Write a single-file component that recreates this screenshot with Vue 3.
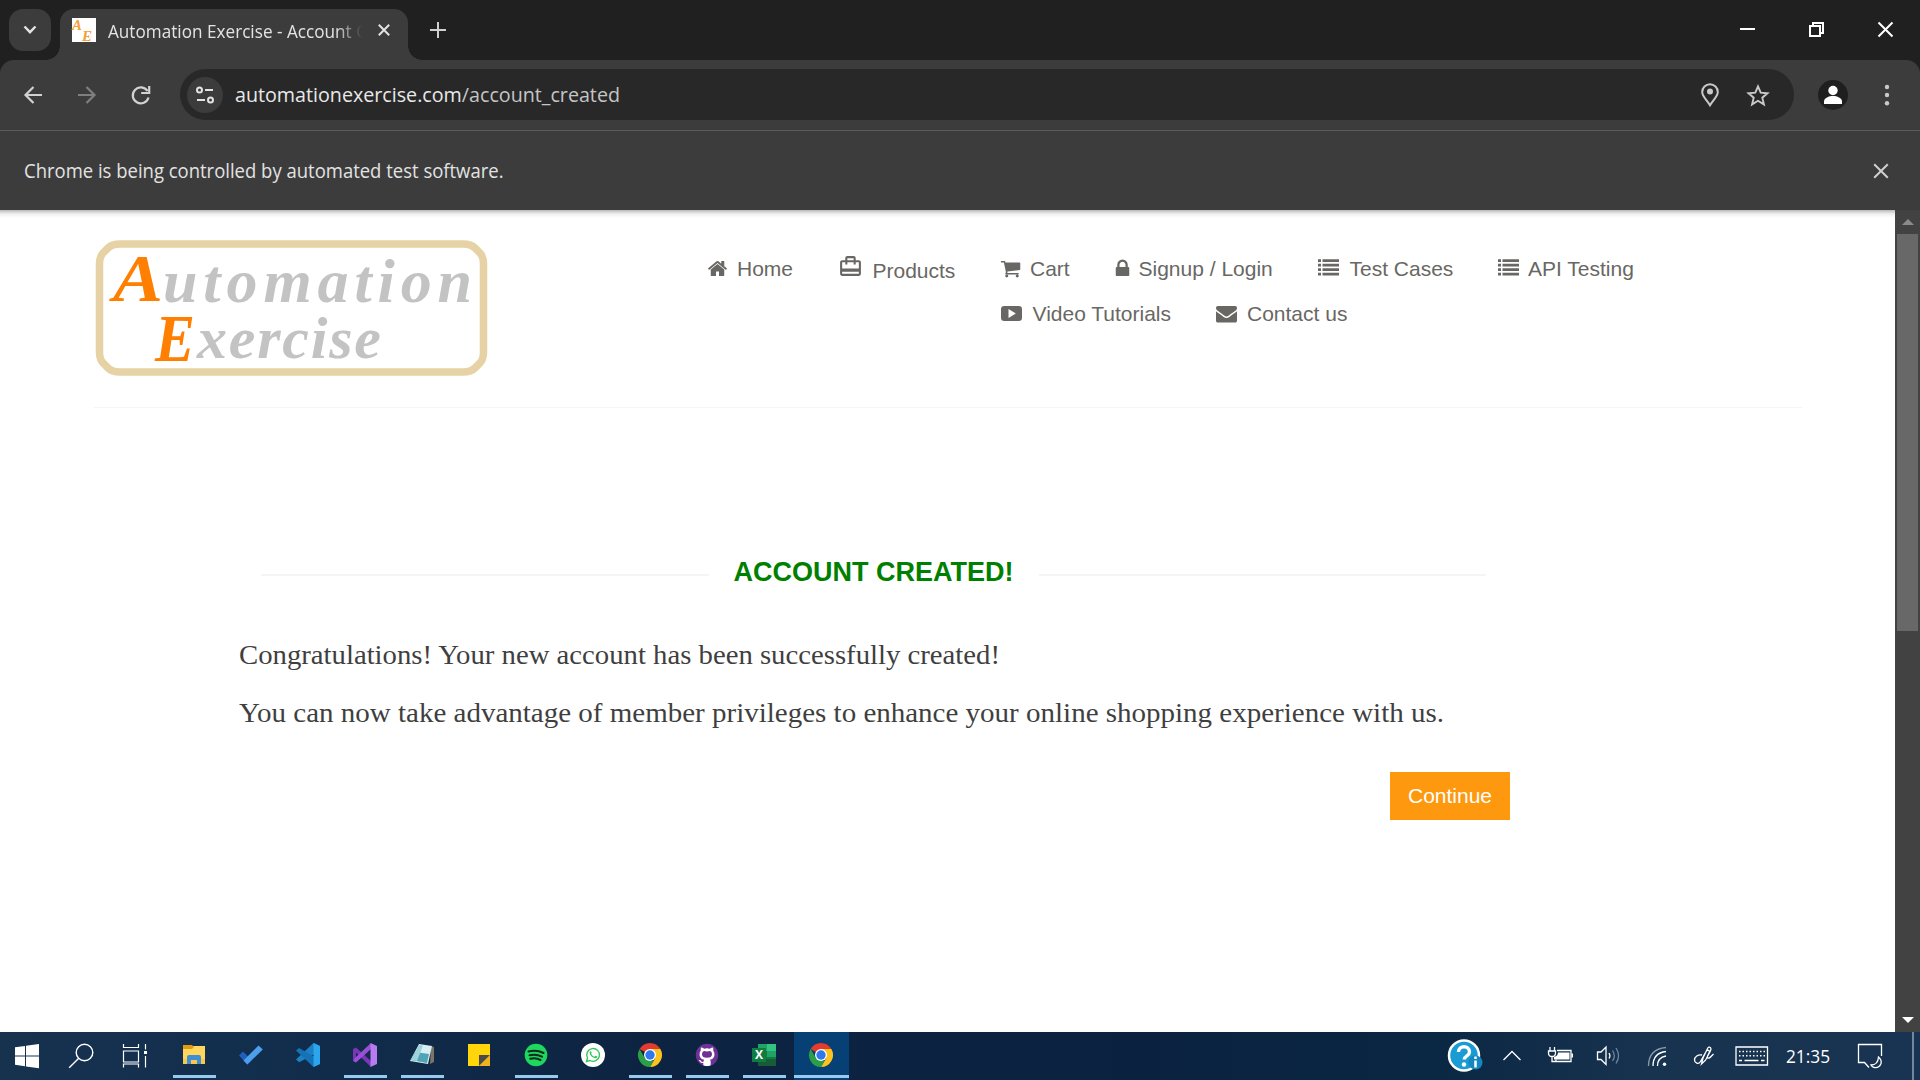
<script setup>
const icons = {
  home: 'M1472 992v480q0 26-19 45t-45 19h-384v-384h-256v384h-384q-26 0-45-19t-19-45v-480q0-1 .5-3t.5-3l575-474 575 474q1 2 1 6zm223-69l-62 74q-8 9-21 11h-3q-13 0-21-7l-692-577-692 577q-12 8-24 7-13-2-21-11l-62-74q-8-10-7-23.5t11-21.5l719-599q32-26 76-26t76 26l244 204v-195q0-14 9-23t23-9h192q14 0 23 9t9 23v408l219 182q10 8 11 21.5t-7 23.5z',
  cart: 'M704 1536q0 52-38 90t-90 38-90-38-38-90 38-90 90-38 90 38 38 90zm896 0q0 52-38 90t-90 38-90-38-38-90 38-90 90-38 90 38 38 90zm128-1088v512q0 24-16.5 42.5t-40.5 21.5l-1044 122q13 60 13 70 0 16-24 64h920q26 0 45 19t19 45-19 45-45 19h-1024q-26 0-45-19t-19-45q0-11 8-31.5t16-36 21.5-40 15.5-29.5l-177-823h-204q-26 0-45-19t-19-45 19-45 45-19h256q16 0 28.5 6.5t19.5 15.5 13 24.5 8 26 5.5 29.5 4.5 26h1201q26 0 45 19t19 45z',
  lock: 'M640 768h512v-192q0-106-75-181t-181-75-181 75-75 181v192zm832 96v576q0 40-28 68t-68 28h-960q-40 0-68-28t-28-68v-576q0-40 28-68t68-28h32v-192q0-184 132-316t316-132 316 132 132 316v192h32q40 0 68 28t28 68z',
  list: 'M0 100h256v241H0zM384 100h1408v241H384zM0 484h256v241H0zM384 484h1408v241H384zM0 868h256v241H0zM384 868h1408v241H384zM0 1252h256v241H0zM384 1252h1408v241H384z',
  video: 'M280 256h1232q280 0 280 280v720q0 280-280 280H280q-280 0-280-280V536q0-280 280-280zM680 530q-40-24-40 20v692q0 44 40 20l550-336q40-30 0-60z',
  envelope: 'M1792 710v794q0 66-47 113t-113 47h-1472q-66 0-113-47t-47-113v-794q44 49 101 87 362 246 497 345 57 42 92.5 65.5t94.5 48 110 24.5h2q51 0 110-24.5t94.5-48 92.5-65.5q170-123 498-345 57-39 100-87zm0-294q0 79-49 151t-122 123q-376 261-468 325-10 7-42.5 31t-54 38.5-52 32.5-57.5 27-50 9h-2q-23 0-50-9t-57.5-27-52-32.5-54-38.5-42.5-31q-91-64-262-182.5t-205-142.5q-62-42-117-115.5t-55-136.5q0-78 41.5-130t118.5-52h1472q65 0 112.5 47t47.5 113z',
}
const topLinks = [
  { label: 'Home', icon: 'home' },
  { label: 'Products', icon: 'travel' },
  { label: 'Cart', icon: 'cart' },
  { label: 'Signup / Login', icon: 'lock' },
  { label: 'Test Cases', icon: 'list' },
  { label: 'API Testing', icon: 'list' },
]
const moreLinks = [
  { label: 'Video Tutorials', icon: 'video' },
  { label: 'Contact us', icon: 'envelope' },
]
const apps = [
  { id: 'explorer', open: true },
  { id: 'todo' },
  { id: 'vscode' },
  { id: 'vstudio', open: true },
  { id: 'notepad', open: true },
  { id: 'sticky' },
  { id: 'spotify', open: true },
  { id: 'whatsapp' },
  { id: 'chrome', open: true },
  { id: 'github', open: true },
  { id: 'excel', open: true },
  { id: 'chrome', open: true, active: true },
]
</script>

<template>
  <div class="screen">
    <header class="tabstrip">
      <button class="tab-search">
        <svg width="14" height="10" viewBox="0 0 14 10"><path d="M1.5 1.5 7 7.2l5.500-5.700" fill="none" stroke="#e3e3e3" stroke-width="2.400" /></svg>
      </button>
      <div class="tab">
        <svg class="favicon" viewBox="0 0 24 24">
          <rect width="24" height="24" fill="#fff" />
          <text x="0" y="12" font-size="15">A</text>
          <text x="10" y="22.500" font-size="15">E</text>
        </svg>
        <svg class="tab-title" width="262" height="30" viewBox="0 0 262 30">
          <text x="0" y="21" font-size="18" textLength="259" lengthAdjust="spacingAndGlyphs">Automation Exercise - Account C</text>
        </svg>
        <svg class="tab-close" width="12" height="12" viewBox="0 0 12 12"><path d="M.8.8l10.400 10.400M11.200.8.8 11.200" stroke="#e3e3e3" stroke-width="2" /></svg>
      </div>
      <svg class="new-tab" width="16" height="16" viewBox="0 0 16 16"><path d="M8 0v16M0 8h16" stroke="#d0d0d0" stroke-width="2" /></svg>
      <svg class="window-buttons" width="190" height="60" viewBox="1730 0 190 60" fill="none" stroke="#fff">
        <path d="M1740 29h15" stroke-width="2" />
        <path d="M1813 26v-3h10v10h-3M1810 26h10v10h-10z" stroke-width="2" />
        <path d="M1878.500 22.500l14 14M1892.500 22.500l-14 14" stroke-width="2" />
      </svg>
    </header>

    <div class="toolbar">
      <svg class="nav-buttons" width="180" height="69" viewBox="0 60 180 69" fill="none" stroke-width="2.200">
        <path d="M42 95H26M33.500 87l-8 8 8 8" stroke="#d2d2d2" />
        <path d="M78 95h16M86.500 87l8 8-8 8" stroke="#7f7f7f" />
        <path d="M147.500 91a8 8 0 1 0 1 6.500M149.200 86v7h-8" stroke="#d2d2d2" />
      </svg>
      <div class="omnibox">
        <span class="site-info">
          <svg width="20" height="20" viewBox="0 0 20 20" fill="none" stroke="#e3e3e3" stroke-width="2"><circle cx="4.500" cy="5" r="2.500" /><path d="M10 5h8M2 15h8" /><circle cx="15.500" cy="15" r="2.500" /></svg>
        </span>
        <svg class="url" width="400" height="50" viewBox="0 0 400 50">
          <text x="0" y="32" font-size="20" textLength="385" lengthAdjust="spacingAndGlyphs"><tspan fill="#e8e8e8">automationexercise.com</tspan><tspan fill="#c5c5c5">/account_created</tspan></text>
        </svg>
        <svg class="box-actions" width="104" height="51" viewBox="1690 69 104 51" fill="none" stroke="#c9c9c9">
          <path d="M1710 84.200a7.800 7.800 0 0 1 7.800 7.800c0 4.500-4.500 7.500-7.800 13.200-3.300-5.700-7.800-8.700-7.800-13.200a7.800 7.800 0 0 1 7.800-7.800z" stroke-width="2" />
          <circle cx="1710" cy="91.500" r="3" fill="#c9c9c9" stroke="none" />
          <path d="M1758 86.300l2.700 6.300 6.800.6-5.200 4.500 1.600 6.700-5.900-3.600-5.900 3.600 1.600-6.700-5.200-4.500 6.800-.6z" stroke-width="1.900" />
        </svg>
      </div>
      <svg class="profile" width="126" height="69" viewBox="1794 60 126 69">
        <circle cx="1833" cy="95" r="15" fill="#1f1f1f" />
        <g fill="#fff"><circle cx="1833" cy="90.500" r="4.700" /><path d="M1824 104v-2.500c0-3.600 5-5.500 9-5.500s9 1.900 9 5.500v2.500z" /></g>
        <g fill="#c9c9c9"><circle cx="1887" cy="87" r="2.200" /><circle cx="1887" cy="95" r="2.200" /><circle cx="1887" cy="103.200" r="2.200" /></g>
      </svg>
    </div>

    <div class="infobar">
      <svg width="500" height="40" viewBox="0 0 500 40">
        <text x="0" y="27" font-size="19.500" fill="#e3e3e3" textLength="479.500" lengthAdjust="spacingAndGlyphs">Chrome is being controlled by automated test software.</text>
      </svg>
      <svg width="16" height="16" viewBox="0 0 16 16"><path d="M1.200 1.200l13.600 13.600M14.800 1.200 1.200 14.800" stroke="#d0d0d0" stroke-width="2" /></svg>
    </div>

    <div class="viewport">
      <main class="page">
        <div class="site-header">
          <svg class="logo" width="393" height="138" viewBox="95 239 393 138">
            <path d="M120 244h343q8 0 12 4l5 5q3.500 4 3.500 11v88q0 7-3.500 11l-5 5q-4 4-12 4H120q-8 0-12-4l-5-5q-3.500-4-3.500-11v-88q0-7 3.500-11l5-5q4-4 12-4z" fill="none" stroke="#e6d2a4" stroke-width="7.500" />
            <g class="logo-text">
              <text x="113" y="301" class="cap" font-size="68" textLength="50" lengthAdjust="spacingAndGlyphs">A</text>
              <text x="163" y="302" font-size="62" textLength="309" lengthAdjust="spacing">utomation</text>
              <text x="155" y="361" class="cap" font-size="68" textLength="40" lengthAdjust="spacingAndGlyphs">E</text>
              <text x="197" y="358" font-size="60" textLength="184" lengthAdjust="spacing">xercise</text>
            </g>
          </svg>
          <nav class="menu">
            <div class="menu-row">
              <a v-for="l in topLinks" :key="l.label" :class="l.icon">
                <svg v-if="l.icon === 'travel'" width="25" height="25" viewBox="0 0 24 24"><path d="M20 6h-3V4c0-1.110-.89-2-2-2H9c-1.110 0-2 .89-2 2v2H4c-1.110 0-2 .89-2 2v11c0 1.110.89 2 2 2h16c1.110 0 2-.89 2-2V8c0-1.110-.89-2-2-2zM9 4h6v2H9V4zm11 15H4v-2h16v2zm0-5H4V8h3v2h2V8h6v2h2V8h3v6z" /></svg>
                <svg v-else width="21" height="21" viewBox="0 0 1792 1792"><path :d="icons[l.icon]" fill-rule="evenodd" /></svg>
                <span>{{ l.label }}</span>
              </a>
            </div>
            <div class="menu-row second">
              <a v-for="l in moreLinks" :key="l.label" :class="l.icon">
                <svg width="21" height="21" viewBox="0 0 1792 1792"><path :d="icons[l.icon]" fill-rule="evenodd" /></svg>
                <span>{{ l.label }}</span>
              </a>
            </div>
          </nav>
        </div>

        <section class="created">
          <h2>Account Created!</h2>
          <svg class="message" width="1240" height="58" viewBox="0 0 1240 58">
            <text x="0" y="33" textLength="761" lengthAdjust="spacingAndGlyphs">Congratulations! Your new account has been successfully created!</text>
          </svg>
          <svg class="message" width="1240" height="58" viewBox="0 0 1240 58">
            <text x="0" y="33" textLength="1205" lengthAdjust="spacingAndGlyphs">You can now take advantage of member privileges to enhance your online shopping experience with us.</text>
          </svg>
          <button class="continue">Continue</button>
        </section>
      </main>
      <div class="scrollbar">
        <i class="up"></i>
        <div class="thumb"></div>
        <i class="down"></i>
      </div>
    </div>

    <footer class="taskbar">
      <svg width="167" height="48" viewBox="0 1032 167 48">
        <path fill="#fff" d="M15 1047.300l10-1.400v9.600H15zM26 1045.700l13-1.800v11.600H26zM15 1056.500h10v9.700l-10-1.400zM26 1056.500h13v11.700l-13-1.800z" />
        <g fill="none" stroke="#fff" stroke-width="1.400">
          <circle cx="84.500" cy="1052.500" r="8.300" /><path d="M78.500 1058.500l-9.300 9.300" />
          <path stroke-width="1.200" d="M123.500 1044v3.500h15V1044M123.500 1051h15v11h-15zM123.500 1067.500v-3.500h15v3.500M145.500 1044v5.500M145.500 1056v11.500" />
        </g>
        <rect x="144" y="1051" width="3" height="3" fill="#fff" />
      </svg>

      <div v-for="(a, i) in apps" :key="i" class="app" :class="{ open: a.open, active: a.active }">
        <svg v-if="a.id === 'explorer'" viewBox="0 0 24 24">
          <path fill="#ffd75e" d="M1 3h22v18H1z" /><path fill="#e39a0c" d="M1 2h9l2 2-2 2H1z" /><path fill="#f9c84a" d="M1 16h22v5H1z" />
          <path fill="#3f8fd2" d="M5 21v-7q0-2 2-2h10q2 0 2 2v7h-4v-4H9v4z" />
        </svg>
        <svg v-else-if="a.id === 'todo'" viewBox="0 0 24 24">
          <path fill="#1f5fc0" d="M0 12.500 4 8.500l8.500 8.500-4.200 4.500z" /><path fill="#4ba0ee" d="M8.300 21.500 4.500 17.500 19.500 2.500l4.300 4z" />
        </svg>
        <svg v-else-if="a.id === 'vscode'" viewBox="0 0 24 24">
          <path fill="#1b80c4" d="M17.500 0 24 3v5L3.200 19.200 0 16.500z" /><path fill="#1473b8" d="M3 5 0 7.500 17.500 24l6.500-3v-4z" /><path fill="#2aa5ee" d="M17.500 0 24 3v18l-6.500 3z" />
        </svg>
        <svg v-else-if="a.id === 'vstudio'" viewBox="0 0 24 24">
          <path fill="#7a36b8" d="M0 6l3-1.500L18 18v6L3 9.500V16l-3 2z" /><path fill="#9a4fd8" d="M0 18l3 1.500L18 6V0L3 14z" /><path fill="#b87cf0" d="M17.500 0 24 3v18l-6.500 3z" />
        </svg>
        <svg v-else-if="a.id === 'notepad'" viewBox="0 0 24 24">
          <path fill="#7d7466" d="M21 3l3 1v15l-4 2z" /><path fill="#d7eef2" d="M9 1l13 2-4 18L0 18z" /><path fill="#4fa5b5" d="M5 9l14 2-2 9L1 17z" /><path fill="#9ed3dc" d="M9 2l4 .5L7 18l-6-1z" />
        </svg>
        <svg v-else-if="a.id === 'sticky'" viewBox="0 0 24 24">
          <path fill="#ffd60a" d="M1 1h22v11l-11 11H1z" /><path fill="#4a4a4a" d="M12 12h11L12 23z" /><path fill="#f0b11d" d="M23 12v11H12z" />
        </svg>
        <svg v-else-if="a.id === 'spotify'" viewBox="0 0 24 24">
          <circle cx="12" cy="12" r="11.300" fill="#1ed760" /><path d="M4.500 8.500q8-2.200 15 1.500M5.500 12.300q6.500-1.800 12.500 1.400M6.300 15.800q5.500-1.400 10.200 1.200" fill="none" stroke="#0c2b1a" stroke-width="2" stroke-linecap="round" />
        </svg>
        <svg v-else-if="a.id === 'whatsapp'" viewBox="0 0 24 24">
          <circle cx="12" cy="12" r="12" fill="#fff" /><path d="M5.500 18.500l1-3.500a6.400 6.400 0 1 1 2.500 2.500z" fill="none" stroke="#35c75a" stroke-width="1.400" /><path d="M9 8.500c.7-.7 1.200-.3 1.700 1.200.1.600-.7.900-.4 1.400.8 1.500 1.800 2.200 3 2.600.6 0 .9-1.200 1.500-.9 1.500.7 1.700.8 1.200 1.700-1.700 2.300-8.800-2-7-6z" fill="#35c75a" />
        </svg>
        <svg v-else-if="a.id === 'chrome'" viewBox="0 0 24 24">
          <path fill="#e33b2e" d="M12 12 1.600 6a12 12 0 0 1 20.800 0z" /><path fill="#fcc31e" d="M12 6h10.400A12 12 0 0 1 12 24l5.200-9z" /><path fill="#2a9f47" d="M1.600 6l5.200 9 5.200 3h3.500L12 24A12 12 0 0 1 1.600 6z" />
          <circle cx="12" cy="12" r="6" fill="#fff" /><circle cx="12" cy="12" r="4.700" fill="#2f78ec" />
        </svg>
        <svg v-else-if="a.id === 'github'" viewBox="0 0 24 24">
          <circle cx="12" cy="12" r="11.200" fill="#6e3294" /><path fill="#fff" d="M12 5.300q1.700 0 2.800.4Q17 4.300 18 4.600q.6 1.800.2 3Q19.700 9.300 19.500 12q-.4 4-4.600 4.700 1 1 .8 2.300v2.700q-.2.800-1.200 1-2.500.6-5 0-1-.2-1.200-1V20q-2.300.5-3.300-1.300-.4-1-1.400-1.500 1.600-.5 2.700 1.100.8 1 2.100.4.100-1.200.8-2Q4.900 16 4.500 12q-.2-2.700 1.300-4.400-.4-1.200.2-3 1-.3 3.200 1.100 1.100-.4 2.800-.4z" />
          <path fill="#6e3294" d="M9 8q-2 .6-2 3.300 0 3.500 5 3.500t5-3.500Q17 8.600 15 8q-3 .8-6 0z" />
        </svg>
        <svg v-else viewBox="0 0 24 24">
          <path fill="#21a366" d="M6 1h9v7H6z" /><path fill="#33c481" d="M15 1h9v7h-9z" /><path fill="#107c41" d="M6 8h9v8H6zM15 8h9v8h-9z" /><path fill="#185c37" d="M6 16h18v7H6z" /><path fill="#21a366" d="M15 8h9v6h-9z" />
          <rect y="5" width="14" height="14" fill="#107c41" /><text class="excel-x" x="3" y="16.200" font-size="12" fill="#fff">X</text>
        </svg>
      </div>

      <svg class="tray" width="340" height="48" viewBox="1440 1032 340 48" fill="none" stroke="#fff" stroke-width="1.300">
        <circle cx="1464" cy="1055.500" r="15" fill="#1b9bd3" stroke-width="2.500" />
        <path d="M1458.500 1052c0-7 11-7 11 0 0 4-5.300 3.600-5.300 7.500" stroke-width="3.400" /><circle cx="1464" cy="1064.500" r="2.200" fill="#fff" stroke="none" />
        <circle cx="1475.500" cy="1062.500" r="7" fill="#1487c0" stroke="none" /><path d="M1475.500 1060.500v7M1475.500 1056.500v2.500" stroke-width="2.500" />
        <path d="M1503.500 1060l8.500-8.500 8.500 8.500" />
        <path d="M1557 1050.500h14v11h-15v-2M1552 1056.500v5h4M1550 1047v4M1554.500 1047v4M1548.500 1051h7v2q0 3.500-3.500 3.500t-3.500-3.500z" /><path d="M1558 1052.500h11.500v7H1554v-2.500q4-1 4-4.500zM1571.500 1053.500h1.500v4h-1.500z" fill="#fff" stroke="none" />
        <path d="M1597.500 1052h3.500l5-5v17.500l-5-5h-3.500z" /><path d="M1609 1053q1.800 2.700 0 5.500" /><path d="M1612.500 1050.500q3.600 5.300 0 10.500M1616 1048q5 7.700 0 15.500" stroke="#72849a" />
        <path d="M1648.500 1066q0-17 17.500-18.500" stroke="#8999aa" /><path d="M1653 1066q0-13 13-14.500M1657.500 1066q0-8.500 8.500-10" /><circle cx="1664.500" cy="1064.200" r="1.700" fill="#fff" stroke="none" />
        <path d="M1701.500 1064l1.500-6 4.500-9.500q1.500-2.300 3-.8 1 1.200 0 3l-5 9.500zM1702 1055c-4-1-7.500 2-7.500 5s4 5 6 1.500l5-9c2-4 5-2 3.500.5l-1.500 3c-1 3 2 2.500 3.500.5l2.500-2.500" />
        <path d="M1736 1047h31.500v18H1736z" /><path d="M1739 1051.500h26M1739 1055.700h26" stroke-dasharray="1.500 2" stroke-width="1.500" /><path d="M1739 1060.500h3M1744.500 1060.500h14M1761 1060.500h3.500" />
      </svg>
      <svg class="clock" width="60" height="48" viewBox="1780 1032 60 48">
        <text x="1786" y="1062.700" font-size="18.500" textLength="44" lengthAdjust="spacingAndGlyphs" fill="#fff">21:35</text>
      </svg>
      <svg width="80" height="48" viewBox="1840 1032 80 48" fill="none" stroke="#fff" stroke-width="1.300">
        <path d="M1881.500 1056v-11.500h-23v18h6l4.500 5" /><path d="M1878.500 1057q3.500 3 2.500 6.500-1.500 4.500-6.500 4-2.500-.4-3.500-2.500 7 0 7.500-8z" />
        <path d="M1913 1032v48" stroke="#74879c" stroke-width="2" />
      </svg>
    </footer>
  </div>
</template>

<style>
body { margin: 0; overflow: hidden; }
</style>

<style scoped>
* { box-sizing: border-box; }
svg { display: block; flex: none; overflow: visible; }
button { border: 0; padding: 0; font: inherit; }
.screen { width: 1920px; height: 1080px; display: flex; flex-direction: column; background: #202020; font-family: "Open Sans", "Noto Sans", sans-serif; overflow: hidden; }
.tabstrip { height: 60px; display: flex; align-items: flex-start; flex: none; }
.tab-search { width: 42px; height: 42px; margin: 9px 9px 0; border-radius: 14px; background: #3c3c3c; display: flex; align-items: center; justify-content: center; }
.tab { position: relative; width: 348px; height: 51px; margin-top: 9px; padding: 0 18px 0 12px; border-radius: 14px 14px 0 0; background: #3c3c3c; display: flex; }
.tab::before, .tab::after { content: ""; position: absolute; bottom: 0; width: 14px; height: 14px; }
.tab::before { left: -14px; background: radial-gradient(circle at 0 0, transparent 13.500px, #3c3c3c 14px); }
.tab::after { right: -14px; background: radial-gradient(circle at 100% 0, transparent 13.500px, #3c3c3c 14px); }
.favicon { width: 24px; height: 24px; margin-top: 9px; font-family: "Liberation Serif", serif; font-style: italic; font-weight: bold; fill: #f5a03a; }
.tab-title { margin: 8px 0 0 12px; fill: #e3e3e3; -webkit-mask-image: linear-gradient(90deg, #000 228px, transparent 254px); mask-image: linear-gradient(90deg, #000 228px, transparent 254px); }
.tab-close { margin: 15px 0 0 8px; }
.new-tab { margin: 22px 0 0 22px; }
.window-buttons { margin-left: auto; }
.toolbar { height: 71px; flex: none; display: flex; border-radius: 14px 14px 0 0; background: #3c3c3c; border-bottom: 1.500px solid #5b5b5b; }
.omnibox { width: 1614px; height: 51px; margin-top: 9px; border-radius: 26px; background: #282828; display: flex; align-items: center; padding-left: 7px; }
.site-info { width: 36px; height: 36px; border-radius: 50%; background: #3c3c3c; display: flex; align-items: center; justify-content: center; }
.url { margin-left: 12px; }
.box-actions { margin-left: auto; }
.infobar { height: 79px; flex: none; display: flex; align-items: center; justify-content: space-between; background: #3c3c3c; padding: 0 31px 0 24px; }
.viewport { height: 822px; flex: none; display: flex; background: #fff; }
.page { width: 1895px; background: linear-gradient(#b9b9b9, #f0f0f0 4px, #fff 8px) #fff; font-family: "Liberation Sans", Arial, sans-serif; }
.site-header { width: 1708px; height: 198px; margin-left: 94px; padding: 29px 0 0 1px; display: flex; border-bottom: 1.500px solid #f5f5f5; }
.logo-text { font-family: "Liberation Serif", serif; font-style: italic; font-weight: bold; fill: #c3c3c3; }
.logo-text .cap { fill: #ff7f00; }
.menu { margin: 13px 0 0 219px; font-size: 21px; line-height: 30px; color: #696763; fill: #696763; }
.menu-row { display: grid; grid-template-columns: 133px 160px 111.500px 206.500px 180px auto; height: 45px; white-space: nowrap; }
.menu-row.second { grid-template-columns: 215px auto; padding-left: 293.500px; }
.menu a { display: flex; align-items: flex-start; }
.menu span { padding-top: 2px; }
.menu svg { margin: 5.500px 9px 0 0; }
.menu .travel { margin: 0 0 0 -2px; }
.menu .travel svg { margin: 2px 9.500px 0 0; }
.menu .travel span { padding-top: 4px; }
.menu .lock svg { margin-right: 6px; }
.menu .list svg { margin-right: 10.500px; }
.menu .list:last-child svg { margin-right: 9px; }
.menu .video svg { margin-right: 11px; }
.menu .envelope svg { margin-right: 10.500px; }
.created { width: 1270px; margin-left: 239px; padding-top: 148px; display: flex; flex-direction: column; }
.created h2 { display: flex; align-items: center; gap: 25px; margin: 0 23px 43px 22px; font-size: 27px; line-height: 32px; font-weight: bold; text-transform: uppercase; color: #008000; white-space: nowrap; }
.created h2::before, .created h2::after { content: ""; flex: 1; height: 2px; margin-top: 5px; background: #f5f5f5; }
.message { font-family: "Liberation Serif", serif; font-size: 28px; fill: #3f3f3f; }
.continue { width: 120px; height: 48px; margin: 25px 0 0 1151px; background: #fe980f; color: #fff; font-size: 21px; line-height: 48px; }
.scrollbar { width: 25px; background: #424242; display: flex; flex-direction: column; align-items: center; padding: 9px 0; }
.scrollbar i { border: 6px solid transparent; border-width: 0 6px; }
.scrollbar .up { border-bottom: 6px solid #8b8b8b; }
.scrollbar .down { border-top: 6px solid #fff; margin-top: auto; }
.thumb { width: 21px; height: 397px; margin-top: 9px; background: #686868; }
.taskbar { height: 48px; flex: none; display: flex; background: linear-gradient(90deg, #17324f, #132f4e 12%, #0c2341 35%, #0a2240 60%, #0a2743 75%, #18334f 86%, #183452); }
.app { width: 55px; height: 48px; margin-right: 2px; display: flex; flex-direction: column; align-items: center; padding-top: 11px; }
.app svg { width: 24px; height: 24px; margin-right: 1px; }
.app.open::after { content: ""; width: 43px; height: 3px; margin-top: 8px; background: #98c9ef; }
.app.active { background: #064075; }
.app.active::after { width: 55px; }
.excel-x { font-family: "Open Sans", sans-serif; font-weight: bold; }
.tray { margin-left: auto; }
</style>
